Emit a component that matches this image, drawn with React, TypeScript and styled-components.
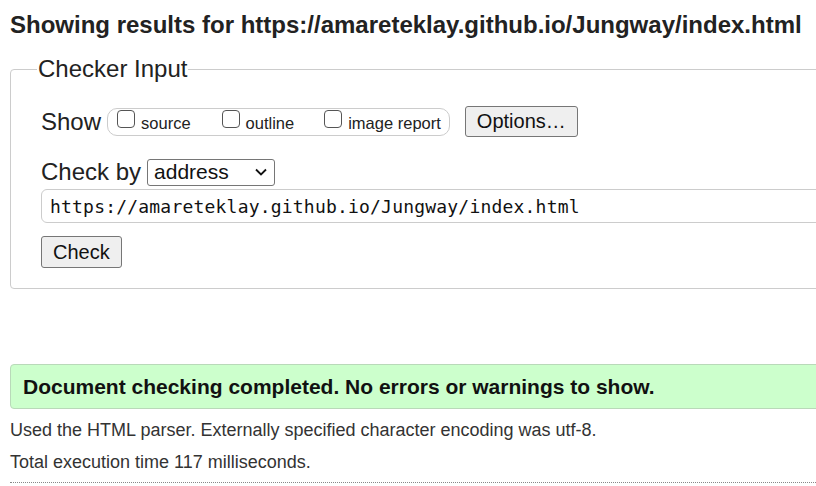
import React from "react";
import styled, { createGlobalStyle } from "styled-components";

const GlobalStyle = createGlobalStyle`
  html, body {
    margin: 0;
    padding: 0;
    background: #fff;
    overflow: hidden;
  }
  body {
    font-family: "Liberation Sans", Arial, sans-serif;
    color: #222;
  }
`;

const Page = styled.main`
  width: 900px;
  padding: 0 10px;
`;

const Heading = styled.h2`
  margin: 0;
  padding-top: 11px;
  font-size: 24px;
  font-weight: bold;
  line-height: 28px;
`;

const Fieldset = styled.fieldset`
  margin: 17px 0 0;
  padding: 4px 0 20px 30px;
  border: 1px solid #ccc;
  border-radius: 4px;
`;

const Legend = styled.legend`
  font-size: 24px;
  padding: 0 1px;
  margin-left: -4px;
  line-height: 26px;
`;

const Row = styled.div<{ $top?: number }>`
  display: flex;
  align-items: center;
  margin-top: ${({ $top }) => $top ?? 0}px;
`;

const Label = styled.span`
  font-size: 24px;
  margin-right: 6px;
`;

const CheckGroup = styled.div`
  display: flex;
  align-items: center;
  box-sizing: border-box;
  height: 28px;
  padding: 0 8px 0 9px;
  border: 1px solid #ccc;
  border-radius: 10px;
  margin-right: 15px;
`;

const CheckItem = styled.label<{ $gap: number }>`
  display: flex;
  align-items: center;
  font-size: 16.5px;
  padding-top: 3px;
  margin-right: ${({ $gap }) => $gap}px;
`;

const Box = styled.span`
  width: 18px;
  height: 18px;
  border: 1px solid #555;
  border-radius: 4px;
  box-sizing: border-box;
  margin: -8px 6px 0 0;
`;

const Button = styled.button<{ $h: number }>`
  font-family: "Liberation Sans", Arial, sans-serif;
  font-size: 20px;
  color: #111;
  background: #efefef;
  border: 1px solid #767676;
  border-radius: 3px;
  padding: 0 11px;
  height: ${({ $h }) => $h}px;
`;

const Select = styled.div`
  display: flex;
  align-items: center;
  justify-content: space-between;
  box-sizing: border-box;
  width: 128px;
  height: 27px;
  border: 1px solid #767676;
  border-radius: 3px;
  padding: 0 6px 0 6px;
  font-size: 21px;
  color: #111;
`;

const UrlInput = styled.div`
  box-sizing: border-box;
  height: 34px;
  display: flex;
  align-items: center;
  border: 1px solid #ccc;
  border-radius: 6px;
  padding-left: 8px;
  font-family: "DejaVu Sans Mono", "Liberation Mono", monospace;
  font-size: 18px;
  letter-spacing: 0.2px;
  color: #111;
  margin-top: 3px;
`;

const Notice = styled.div`
  margin-top: 75px;
  height: 45px;
  box-sizing: border-box;
  display: flex;
  align-items: center;
  padding-left: 12px;
  background: #ccffcc;
  border: 1px solid #b9d9b9;
  border-radius: 4px;
  font-size: 21px;
  font-weight: bold;
  color: #111;
`;

const Para = styled.p<{ $top: number }>`
  margin: 0;
  font-size: 18px;
  line-height: 22px;
  color: #333;
  padding-top: ${({ $top }) => $top}px;
`;

const Rule = styled.hr`
  margin: 9px 0 0;
  border: 0;
  border-top: 1px dotted #888;
`;

const Chevron = () => (
  <svg width="14" height="10" viewBox="0 0 14 10">
    <path d="M2 2.5 L7 7.5 L12 2.5" fill="none" stroke="#111" strokeWidth="1.8" />
  </svg>
);

const App = () => {
  return (
    <Page>
      <GlobalStyle />
      <Heading>Showing results for https://amareteklay.github.io/Jungway/index.html</Heading>
      <Fieldset>
        <Legend>Checker Input</Legend>
        <Row $top={20}>
          <Label>Show</Label>
          <CheckGroup>
            <CheckItem $gap={31}>
              <Box />
              source
            </CheckItem>
            <CheckItem $gap={30}>
              <Box />
              outline
            </CheckItem>
            <CheckItem $gap={0}>
              <Box />
              image report
            </CheckItem>
          </CheckGroup>
          <Button $h={31}>Options…</Button>
        </Row>
        <Row $top={21}>
          <Label>Check by</Label>
          <Select>
            address
            <Chevron />
          </Select>
        </Row>
        <UrlInput>https://amareteklay.github.io/Jungway/index.html</UrlInput>
        <Row $top={13}>
          <Button $h={32}>Check</Button>
        </Row>
      </Fieldset>
      <Notice>Document checking completed. No errors or warnings to show.</Notice>
      <Para $top={10}>Used the HTML parser. Externally specified character encoding was utf-8.</Para>
      <Para $top={10}>Total execution time 117 milliseconds.</Para>
      <Rule />
    </Page>
  );
};

export default App;
